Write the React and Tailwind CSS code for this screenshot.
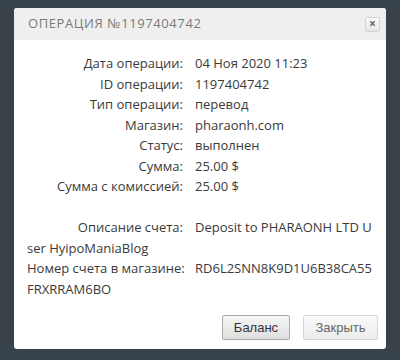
import React from 'react';

const rows = [
  ['Дата операции:', '04 Ноя 2020 11:23'],
  ['ID операции:', '1197404742'],
  ['Тип операции:', 'перевод'],
  ['Магазин:', 'pharaonh.com'],
  ['Статус:', 'выполнен'],
  ['Сумма:', '25.00 $'],
  ['Сумма с комиссией:', '25.00 $'],
];

const extra = [
  ['Описание счета:', 'Deposit to PHARAONH LTD User HyipoManiaBlog'],
  ['Номер счета в магазине:', 'RD6L2SNN8K9D1U6B38CA55FRXRRAM6BO'],
];

function Row({ label, value }) {
  return (
    <div className="break-all">
      <span className="inline-block w-[156px] text-right mr-3 whitespace-nowrap break-normal">{label}</span>
      {value}
    </div>
  );
}

export default function App() {
  return (
    <div className="w-[400px] h-[360px] bg-[#37424a] pt-2 px-[14px]" style={{ fontFamily: '"Open Sans", sans-serif' }}>
      <div className="bg-white rounded-[3px] h-[341px] flex flex-col overflow-hidden">
        {/* Header */}
        <div className="h-8 bg-[#efefef] flex items-center justify-between pl-[14px] pr-[6px]">
          <span className="text-[13px] tracking-[0.6px] text-[#7a7a7a] font-medium">ОПЕРАЦИЯ №1197404742</span>
          <button className="w-[15px] h-[15px] border border-[#d4d4d4] rounded-[2px] bg-gradient-to-b from-[#fafafa] to-[#e6e6e6] flex items-center justify-center text-[#666] text-[12px] font-bold leading-none">
            ×
          </button>
        </div>

        {/* Body */}
        <div className="px-[13px] pt-[13px] text-[13px] leading-[20.5px] text-[#3a3a3a] flex-1">
          {rows.map(([l, v]) => <Row key={l} label={l} value={v} />)}
          <div className="h-[20.5px]" />
          {extra.map(([l, v]) => <Row key={l} label={l} value={v} />)}
        </div>

        {/* Footer */}
        <div className="flex justify-end gap-[13px] pr-[8px] pb-[9px]">
          <button className="w-[68px] h-[25px] border border-[#a9a9a9] rounded-[2px] bg-gradient-to-b from-[#f6f6f6] to-[#dedede] text-[13px] text-[#333]" style={{ fontFamily: '"Liberation Sans", sans-serif' }}>
            Баланс
          </button>
          <button className="w-[75px] h-[25px] border border-[#d6d6d6] rounded-[2px] bg-gradient-to-b from-[#fafafa] to-[#ececec] text-[13px] text-[#666]" style={{ fontFamily: '"Liberation Sans", sans-serif' }}>
            Закрыть
          </button>
        </div>
      </div>
    </div>
  );
}
